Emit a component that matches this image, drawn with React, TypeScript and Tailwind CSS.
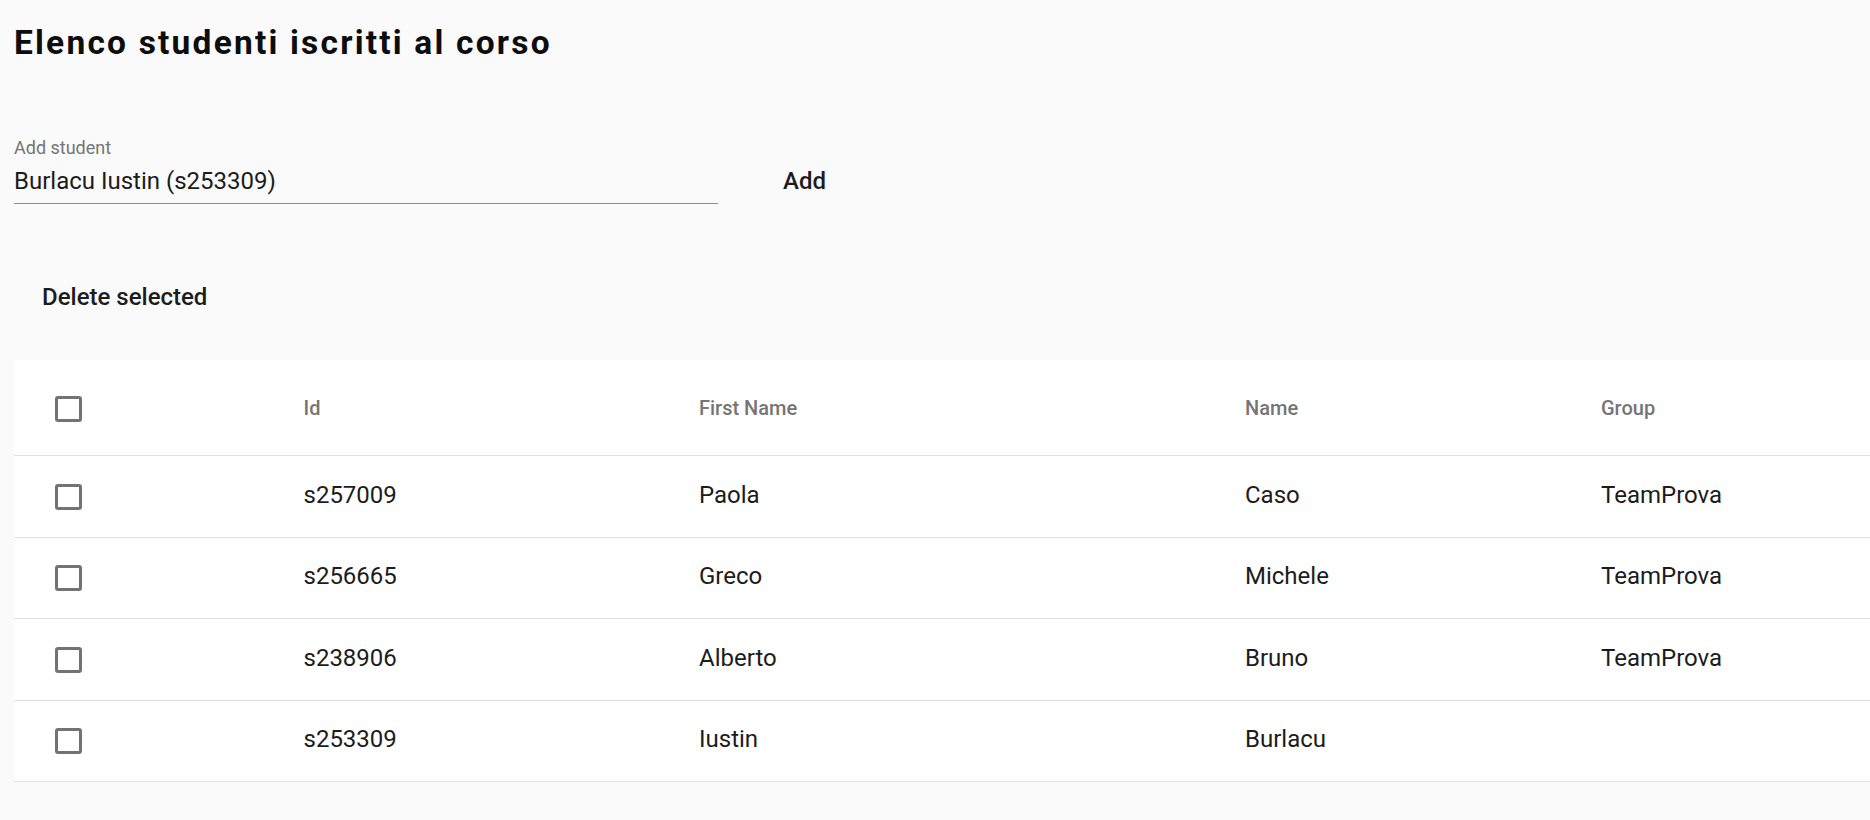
import React from "react";

const rows = [
  { id: "s257009", first: "Paola", name: "Caso", group: "TeamProva" },
  { id: "s256665", first: "Greco", name: "Michele", group: "TeamProva" },
  { id: "s238906", first: "Alberto", name: "Bruno", group: "TeamProva" },
  { id: "s253309", first: "Iustin", name: "Burlacu", group: "" },
];

function Box() {
  return <div className="w-[27px] h-[26px] rounded-[3px] border-[3px] border-[#737373] bg-white" />;
}

export default function App() {
  return (
    <div className="min-h-screen bg-[#fafafa] pl-[14px] font-['Roboto','Helvetica_Neue',sans-serif] text-[#212121]">
      <h1 className="pt-[23px] text-[33.5px] leading-[40px] font-bold tracking-[2.2px] text-[#0d0d0d]">
        Elenco studenti iscritti al corso
      </h1>

      <div className="mt-[75px] flex items-start">
        <div className="w-[704px]">
          <div className="text-[18px] leading-[20px] text-[#757575]">Add student</div>
          <div className="mt-[9px] text-[24px] leading-[28px] text-[#1c1c1c]">Burlacu Iustin (s253309)</div>
          <div className="mt-[8px] h-[1px] bg-[#8f8f8f]" />
        </div>
        <button className="ml-[65px] mt-[29px] text-[24px] leading-[28px] font-medium text-[#1c1c1c]">Add</button>
      </div>

      <button className="ml-[28px] mt-[79px] block text-[24px] leading-[28px] font-medium text-[#1c1c1c]">
        Delete selected
      </button>

      <div className="mt-[49px] bg-white">
        <div className="grid grid-cols-[289.5px_395.5px_546px_356px_1fr] h-[96px] items-center border-b border-[#e0e0e0] text-[20px] font-medium text-[#757575]">
          <div className="pl-[41px] pt-[3px]"><Box /></div>
          <div>Id</div>
          <div>First Name</div>
          <div>Name</div>
          <div>Group</div>
        </div>
        {rows.map((r) => (
          <div
            key={r.id}
            className="grid grid-cols-[289.5px_395.5px_546px_356px_1fr] h-[81.5px] items-center border-b border-[#e0e0e0] text-[24px] text-[#1c1c1c]"
          >
            <div className="pl-[41px] pt-[1px]"><Box /></div>
            <div className="-mt-[3px]">{r.id}</div>
            <div className="-mt-[3px]">{r.first}</div>
            <div className="-mt-[3px]">{r.name}</div>
            <div className="-mt-[3px]">{r.group}</div>
          </div>
        ))}
      </div>
    </div>
  );
}
